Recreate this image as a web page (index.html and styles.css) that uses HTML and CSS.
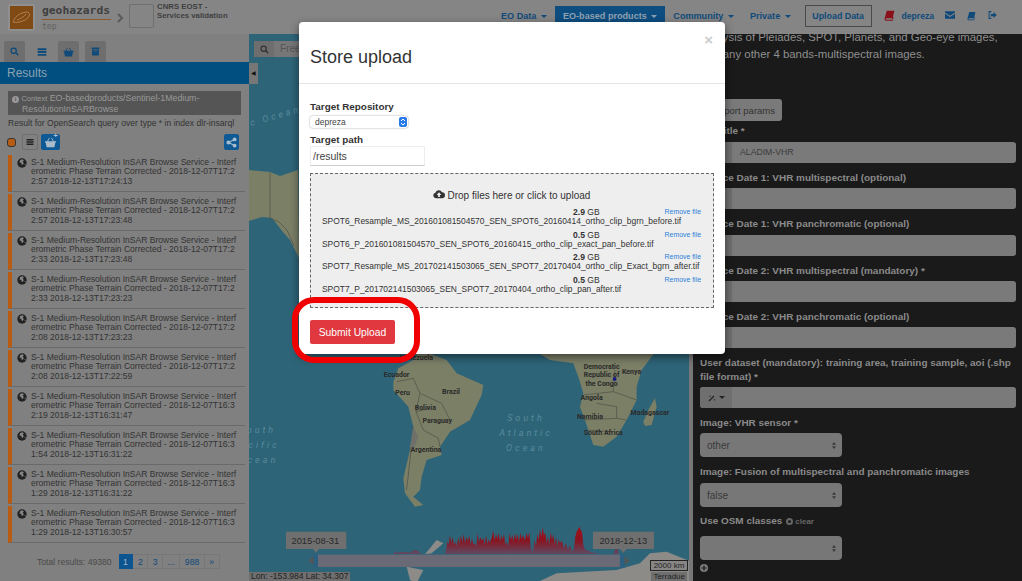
FILE: index.html

```html
<!DOCTYPE html>
<html lang="en">
<head>
    <meta charset="UTF-8">
    <title>Geohazards TEP</title>
    <link rel="stylesheet" href="styles.css">
</head>
<body>
    <svg class="defs" width="0" height="0">
        <symbol id="i-search" viewBox="0 0 16 16"><circle cx="6.500" cy="6.500" r="4.700" fill="none" stroke="currentColor" stroke-width="2.200"/><path d="M10 10l4.600 4.600" stroke="currentColor" stroke-width="2.600"/></symbol>
        <symbol id="i-list" viewBox="0 0 16 16"><path d="M1 2h14v3H1zM1 6.500h14v3H1zM1 11h14v3H1z" fill="currentColor"/></symbol>
        <symbol id="i-basket" viewBox="0 0 16 16"><path d="M0 6h16v2H15l-1.300 7H2.300L1 8H0zM3 6l3-5 1 .6L4.500 6zM13 6l-3-5-1 .6L11.500 6z" fill="currentColor"/></symbol>
        <symbol id="i-archive" viewBox="0 0 16 16"><path d="M1 1h14v3H1zM2 5h12v10H2z" fill="currentColor"/><path d="M6 7.500h4" stroke="#6e6e6e" stroke-width="1.400"/></symbol>
        <symbol id="i-globe" viewBox="0 0 16 16"><circle cx="8" cy="8" r="7.500" fill="currentColor"/><path d="M5 3l4-1 2 2-2 2 2 2-2 3-2-1V8L4 7zM12 10l2-1-1 3z" fill="#858585"/></symbol>
        <symbol id="i-cloud" viewBox="0 0 20 16"><path d="M5 15a4.500 4.500 0 0 1-1-8.900A6 6 0 0 1 15 5a5 5 0 0 1 0 10z" fill="currentColor"/><path d="M10 5l4 4.500h-2.500V13h-3V9.500H6z" fill="#eee"/></symbol>
        <symbol id="i-book" viewBox="0 0 16 16"><path d="M4 1h11l-2.500 11H3.500a1 1 0 0 0 0 2H12l1-4 1 1-1.500 4.500H2.500C1 15 .5 13.500 1 12z" fill="currentColor"/></symbol>
        <symbol id="i-mail" viewBox="0 0 16 12"><path d="M0 0h16v2L8 7 0 2zM0 4l8 5 8-5v8H0z" fill="currentColor"/></symbol>
        <symbol id="i-signout" viewBox="0 0 16 14"><path d="M6 1H2v12h4" fill="none" stroke="currentColor" stroke-width="1.800"/><path d="M5 5h5V1.500L15.500 7 10 12.500V9H5z" fill="currentColor"/></symbol>
        <symbol id="i-share" viewBox="0 0 16 16"><circle cx="12.500" cy="3.500" r="2.800" fill="currentColor"/><circle cx="3.500" cy="8" r="2.800" fill="currentColor"/><circle cx="12.500" cy="12.500" r="2.800" fill="currentColor"/><path d="M12.500 3.500L3.500 8l9 4.500" fill="none" stroke="currentColor" stroke-width="1.600"/></symbol>
        <symbol id="i-wand" viewBox="0 0 16 16"><path d="M2 14L12 4" stroke="currentColor" stroke-width="2.400"/><path d="M4 3v3M2.500 4.500h3M13 10v3M11.500 11.500h3" stroke="currentColor" stroke-width="1"/></symbol>
        <symbol id="i-updown" viewBox="0 0 5 9"><path d="M0 3.500L2.500 0 5 3.500zM0 5.500L2.500 9 5 5.500z" fill="currentColor"/></symbol>
    </svg>

    <header class="navbar">
        <div class="brand">
            <div class="brand-logo">
                <svg width="19" height="13" viewBox="0 0 19 13"><path d="M1 11C3 5 9 1 16 1c3 2 1 6-3 8-4 2-8 3-12 2zM5 9c3-1 7-3 9-6" fill="none" stroke="#b08050" stroke-width="1"/></svg>
            </div>
            <div class="brand-name">
                <div class="brand-title">geohazards</div>
                <div class="brand-sub">tep</div>
            </div>
            <svg class="brand-chevron" width="7" height="10" viewBox="0 0 7 10"><path d="M1 1l4 4-4 4" fill="none" stroke="#5a5a5a" stroke-width="2"/></svg>
            <div class="brand-box"></div>
            <div class="brand-org">CNRS EOST -<br>Services validation</div>
        </div>
        <nav class="nav-links">
            <a class="nav-link">EO Data <i class="caret"></i></a>
            <a class="nav-link active">EO-based products <i class="caret"></i></a>
            <a class="nav-link">Community <i class="caret"></i></a>
            <a class="nav-link">Private <i class="caret"></i></a>
            <a class="nav-upload">Upload Data</a>
            <svg class="nav-icon red" width="11" height="11"><use href="#i-book"/></svg>
            <a class="nav-user">depreza</a>
            <svg class="nav-icon" width="10" height="8"><use href="#i-mail"/></svg>
            <svg class="nav-icon" width="9" height="10"><use href="#i-book"/></svg>
            <svg class="nav-icon" width="9" height="8"><use href="#i-signout"/></svg>
        </nav>
    </header>

    <main class="main">
        <aside class="sidebar">
            <div class="tabs">
                <span class="tab"><svg width="9" height="9"><use href="#i-search"/></svg></span>
                <span class="tab active"><svg width="10" height="10"><use href="#i-list"/></svg></span>
                <span class="tab"><svg width="11" height="10"><use href="#i-basket"/></svg></span>
                <span class="tab"><svg width="9" height="9"><use href="#i-archive"/></svg></span>
            </div>
            <div class="results-head">Results</div>
            <div class="context"><i class="info">i</i> <span class="context-tag">Context</span> EO-basedproducts/Sentinel-1Medium-<br><span class="context-indent">ResolutionInSARBrowse</span></div>
            <p class="query">Result for OpenSearch query over type * in index dlr-insarql</p>
            <div class="tools">
                <span class="swatch"></span>
                <span class="tool"><svg width="8" height="8"><use href="#i-list"/></svg></span>
                <span class="tool blue"><svg width="13" height="11"><use href="#i-basket"/></svg><b class="plus">+</b></span>
                <span class="tool blue share"><svg width="11" height="11"><use href="#i-share"/></svg></span>
            </div>
            <ul class="results">
                <li><svg width="10" height="10"><use href="#i-globe"/></svg><p>S-1 Medium-Resolution InSAR Browse Service - Interferometric Phase Terrain Corrected - 2018-12-07T17:22:57 2018-12-13T17:24:13</p></li>
                <li><svg width="10" height="10"><use href="#i-globe"/></svg><p>S-1 Medium-Resolution InSAR Browse Service - Interferometric Phase Terrain Corrected - 2018-12-07T17:22:57 2018-12-13T17:23:48</p></li>
                <li><svg width="10" height="10"><use href="#i-globe"/></svg><p>S-1 Medium-Resolution InSAR Browse Service - Interferometric Phase Terrain Corrected - 2018-12-07T17:22:33 2018-12-13T17:23:48</p></li>
                <li><svg width="10" height="10"><use href="#i-globe"/></svg><p>S-1 Medium-Resolution InSAR Browse Service - Interferometric Phase Terrain Corrected - 2018-12-07T17:22:33 2018-12-13T17:23:23</p></li>
                <li><svg width="10" height="10"><use href="#i-globe"/></svg><p>S-1 Medium-Resolution InSAR Browse Service - Interferometric Phase Terrain Corrected - 2018-12-07T17:22:08 2018-12-13T17:23:23</p></li>
                <li><svg width="10" height="10"><use href="#i-globe"/></svg><p>S-1 Medium-Resolution InSAR Browse Service - Interferometric Phase Terrain Corrected - 2018-12-07T17:22:08 2018-12-13T17:22:59</p></li>
                <li><svg width="10" height="10"><use href="#i-globe"/></svg><p>S-1 Medium-Resolution InSAR Browse Service - Interferometric Phase Terrain Corrected - 2018-12-07T16:32:19 2018-12-13T16:31:47</p></li>
                <li><svg width="10" height="10"><use href="#i-globe"/></svg><p>S-1 Medium-Resolution InSAR Browse Service - Interferometric Phase Terrain Corrected - 2018-12-07T16:31:54 2018-12-13T16:31:22</p></li>
                <li><svg width="10" height="10"><use href="#i-globe"/></svg><p>S-1 Medium-Resolution InSAR Browse Service - Interferometric Phase Terrain Corrected - 2018-12-07T16:31:29 2018-12-13T16:31:22</p></li>
                <li><svg width="10" height="10"><use href="#i-globe"/></svg><p>S-1 Medium-Resolution InSAR Browse Service - Interferometric Phase Terrain Corrected - 2018-12-07T16:31:29 2018-12-13T16:30:57</p></li>
            </ul>
            <div class="pager">
                <span class="pager-total">Total results: 49380</span>
                <div class="pages">
                    <a class="active">1</a><a>2</a><a>3</a><a>...</a><a>988</a><a>&raquo;</a>
                </div>
            </div>
        </aside>

        <section class="map">
            <svg class="map-canvas" width="440" height="547" viewBox="0 0 440 547">
                <defs>
                    <linearGradient id="histo" x1="0" y1="0" x2="0" y2="1">
                        <stop offset="0" stop-color="#a0101c"/>
                        <stop offset="0.5" stop-color="#8a1420"/>
                        <stop offset="1" stop-color="#5e4a62"/>
                    </linearGradient>
                </defs>
                <path class="land" d="M0 136L21 138 31 142 49 136 50 224 41 206 34 198 23 184 13 183 0 187z"/>
                <path class="border" d="M21 138V184L30 188 38 196 45 212"/>
                <text class="ocean-label" transform="translate(2 92) rotate(-16)">c Ocean</text>
                <g transform="translate(1 316) scale(.3333)">
                    <path class="land" d="M430 95L445 55 490 30 510 0 590 30 620 70 700 105 695 135 660 210 600 245 570 290 575 315 530 330 515 380 510 420 490 440 520 465 495 470 465 430 460 385 480 300 490 230 475 170 430 120z"/>
                    <path class="land" d="M850 0L900 30 970 40 985 80 1000 130 990 170 1005 210 1030 285 1060 290 1100 260 1130 210 1160 150 1160 110 1175 60 1220 0z"/>
                    <path class="land" d="M1180 215L1195 180 1215 145 1220 170 1205 225 1185 228z"/>
                    <path class="ice" d="M525 613L560 570 580 580 545 610zM470 650L520 660 500 700 480 690zM855 700L920 670 1100 660 1170 640 1200 610 1250 605 1335 640V700z"/>
                    <path class="border" d="M440 95L490 85 510 130 498 185 520 240 565 265 570 290M490 230L480 330 470 420M510 130L575 160 600 210M498 185L540 175M1000 135L1090 125 1095 60M1090 125L1160 150M1000 210L1100 205 1130 210M1040 160L1100 170 1100 205M1005 240L1085 245"/>
                    <path class="glacier" d="M490 230L505 260 490 300 480 290z"/>
                    <g class="country">
                        <text x="500" y="30">Venezuela</text>
                        <text x="440" y="81">Ecuador</text>
                        <text x="458" y="136">Peru</text>
                        <text x="603" y="133">Brazil</text>
                        <text x="526" y="180">Bolivia</text>
                        <text x="562" y="220">Paraguay</text>
                        <text x="528" y="305">Argentina</text>
                        <text x="1055" y="56">Democratic</text>
                        <text x="1055" y="82">Republic of</text>
                        <text x="1055" y="108">the Congo</text>
                        <text x="1145" y="72">Kenya</text>
                        <text x="1025" y="149">Angola</text>
                        <text x="1020" y="206">Namibia</text>
                        <text x="1060" y="254">South Africa</text>
                        <text x="1200" y="195">Madagascar</text>
                    </g>
                    <g class="sea">
                        <text x="828" y="214">South</text>
                        <text x="828" y="258">Atlantic</text>
                        <text x="828" y="303">Ocean</text>
                        <text x="22" y="250">South</text>
                        <text x="18" y="294">Pacific</text>
                        <text x="25" y="339">Ocean</text>
                    </g>
                    <path d="M430 612L436 604 442 608 450 606 460 607 470 605 478 608 488 603 496 600 505 604 515 612zM585 612L590 590 593 572 596 585 600 555 604 580 608 562 612 585 616 575 620 588 625 562 629 582 633 556 637 578 641 552 645 580 650 560 654 575 658 555 662 585 666 565 670 583 675 580 679 590 683 550 687 578 691 560 695 572 700 565 704 585 708 556 712 582 716 568 720 578 726 560 730 542 734 572 738 552 742 566 746 548 750 575 754 556 758 570 762 552 766 585 770 575 775 590 779 548 783 570 787 555 791 575 795 550 799 568 803 553 807 575 811 548 815 566 820 556 824 572 830 548 834 565 838 545 842 590 846 605 850 600 854 570 858 590 862 552 866 570 870 538 874 560 878 532 882 555 886 548 890 580 894 558 898 585 902 545 906 570 910 552 914 585 918 560 922 590 926 568 930 580 936 572 942 595 948 580 954 600 960 585 966 606 972 595 976 560 980 545 984 538 988 530 992 540 996 545 1000 585 1005 598 1015 603 1030 608 1050 612zM1090 612L1096 598 1102 596 1108 612z" fill="url(#histo)"/>
                    <rect class="knob" x="190" y="612" width="14" height="42"/>
                    <rect class="knob" x="1110" y="612" width="14" height="42"/>
                    <rect class="slider-bar" x="204" y="614" width="906" height="37"/>
                    <path class="arrow" d="M190 618L176 632 190 644zM1124 618L1138 632 1124 644z"/>
                    <path class="date-box" d="M108 545H289V597H207L198 608 189 597H108zM1029 545H1212V597H1130L1120 608 1110 597H1029z"/>
                    <text class="date" x="196" y="582">2015-08-31</text>
                    <text class="date" x="1120" y="582">2018-12-13</text>
                    <rect class="dot" x="1089" y="82" width="10" height="10"/>
                </g>
            </svg>
            <div class="map-search">
                <span class="map-search-icon"><svg width="9" height="9"><use href="#i-search"/></svg></span>
                <span class="map-search-text">Free</span>
            </div>
            <div class="map-collapse">&#9664;</div>
            <div class="map-coords">Lon: -153.984 Lat: 34.307</div>
            <div class="map-scale">2000 km</div>
            <div class="map-credit">Terradue</div>
        </section>

        <div class="splitter"></div>

        <section class="panel">
            <p class="panel-text">Analysis of Pleiades, SPOT, Planets, and Geo-eye images,<br>or many other 4 bands-multispectral images.</p>
            <button class="import-btn">Import params</button>
            <label class="field-label first">Job title *</label>
            <div class="input-group"><span class="addon"></span><span class="field">ALADIM-VHR</span></div>
            <label class="field-label">Source Date 1: VHR multispectral (optional)</label>
            <div class="input-group"><span class="addon"></span><span class="field"></span></div>
            <label class="field-label">Source Date 1: VHR panchromatic (optional)</label>
            <div class="input-group"><span class="addon"></span><span class="field"></span></div>
            <label class="field-label">Source Date 2: VHR multispectral (mandatory) *</label>
            <div class="input-group"><span class="addon"></span><span class="field"></span></div>
            <label class="field-label">Source Date 2: VHR panchromatic (optional)</label>
            <div class="input-group"><span class="addon"></span><span class="field"></span></div>
            <label class="field-label">User dataset (mandatory): training area, training sample, aoi (.shp file format) *</label>
            <div class="input-group"><span class="addon wand"><svg width="8" height="8"><use href="#i-wand"/></svg><i class="caret"></i></span><span class="field"></span></div>
            <label class="field-label">Image: VHR sensor *</label>
            <div class="panel-select"><span>other</span><svg width="4" height="9"><use href="#i-updown"/></svg></div>
            <label class="field-label">Image: Fusion of multispectral and panchromatic images</label>
            <div class="panel-select fusion"><span>false</span><svg width="4" height="9"><use href="#i-updown"/></svg></div>
            <label class="field-label osm">Use OSM classes <span class="clear"><i class="ring"></i> clear</span></label>
            <div class="panel-select classes"><span></span><svg width="4" height="9"><use href="#i-updown"/></svg></div>
            <svg class="add" width="8" height="8" viewBox="0 0 8 8"><circle cx="4" cy="4" r="4" fill="#7a7a7a"/><path d="M4 1.500v5M1.500 4h5" stroke="#1a1a1a" stroke-width="1.200"/></svg>
        </section>
    </main>

    <div class="modal">
        <div class="modal-header">
            <h2>Store upload</h2>
            <span class="modal-close">&times;</span>
        </div>
        <div class="modal-body">
            <label class="modal-label">Target Repository</label>
            <div class="modal-select">
                <span>depreza</span>
                <svg width="8" height="10" viewBox="0 0 8 10"><rect width="8" height="10" rx="2" fill="#2a7ae8"/><path d="M2 4l2-2 2 2M2 6l2 2 2-2" fill="none" stroke="#fff"/></svg>
            </div>
            <label class="modal-label second">Target path</label>
            <input class="modal-input" type="text" value="/results">
            <div class="dropzone">
                <div class="drop-msg"><svg width="12" height="10"><use href="#i-cloud"/></svg> Drop files here or click to upload</div>
                <div class="file">
                    <div class="file-size"><b>2.9</b> GB</div>
                    <a class="file-remove">Remove file</a>
                    <div class="file-name">SPOT6_Resample_MS_201601081504570_SEN_SPOT6_20160414_ortho_clip_bgrn_before.tif</div>
                </div>
                <div class="file">
                    <div class="file-size"><b>0.5</b> GB</div>
                    <a class="file-remove">Remove file</a>
                    <div class="file-name">SPOT6_P_201601081504570_SEN_SPOT6_20160415_ortho_clip_exact_pan_before.tif</div>
                </div>
                <div class="file">
                    <div class="file-size"><b>2.9</b> GB</div>
                    <a class="file-remove">Remove file</a>
                    <div class="file-name">SPOT7_Resample_MS_201702141503065_SEN_SPOT7_20170404_ortho_clip_Exact_bgrn_after.tif</div>
                </div>
                <div class="file">
                    <div class="file-size"><b>0.5</b> GB</div>
                    <a class="file-remove">Remove file</a>
                    <div class="file-name">SPOT7_P_201702141503065_SEN_SPOT7_20170404_ortho_clip_pan_after.tif</div>
                </div>
            </div>
            <button class="submit-btn">Submit Upload</button>
        </div>
    </div>

    <div class="annotation"></div>
</body>
</html>
```

FILE: styles.css

```css
* {
    box-sizing: border-box;
}
html, body {
    margin: 0;
    height: 581px;
    overflow: hidden;
}
body {
    font-family: "Liberation Sans", Arial, sans-serif;
    color: #333;
    background-color: #808080;
}
.defs {
    position: absolute;
}
p {
    margin: 0;
}

/* top bar, everything behind the modal is already dimmed */
.navbar {
    height: 34px;
    display: flex;
    justify-content: space-between;
    background-color: #858585;
}
.brand {
    display: flex;
    align-items: flex-start;
    padding: 4px 0 0 8px;
}
.brand-logo {
    width: 27px;
    height: 27px;
    display: flex;
    align-items: center;
    justify-content: center;
    background-color: #7f4a14;
    border: 2px solid #8f8f8f;
    border-radius: 2px;
}
.brand-name {
    margin-left: 7px;
    width: 69px;
}
.brand-title {
    font-family: "DejaVu Sans Mono", monospace;
    font-size: 11.300px;
    font-weight: 700;
    line-height: 14px;
    padding-bottom: 1px;
    color: #3f3f3f;
    border-bottom: 1px solid #8a5a2a;
}
.brand-sub {
    font-family: "DejaVu Sans Mono", monospace;
    font-size: 8px;
    line-height: 13px;
    color: #5f5f5f;
}
.brand-chevron {
    margin: 9px 0 0 6px;
}
.brand-box {
    width: 25px;
    height: 24px;
    margin-left: 5px;
    border: 1px solid #6f6f6f;
    border-radius: 2px;
}
.brand-org {
    margin: -1px 0 0 3px;
    font-size: 7.800px;
    font-weight: 700;
    line-height: 8.700px;
    color: #3f3f3f;
}
.nav-links {
    display: flex;
    align-items: flex-start;
    padding-right: 25px;
    font-size: 9.100px;
    font-weight: 700;
    color: #0f4a7a;
}
.nav-link {
    height: 28px;
    margin-top: 6px;
    padding: 5px 8px 0;
    white-space: nowrap;
}
.nav-link.active {
    background-color: #0d4d80;
    color: #8fa2b2;
}
.caret {
    display: inline-block;
    width: 0;
    height: 0;
    margin-left: 2px;
    vertical-align: middle;
    border-top: 3px solid currentColor;
    border-left: 3px solid transparent;
    border-right: 3px solid transparent;
}
.nav-upload {
    height: 22px;
    margin: 5px 0 0 6px;
    padding: 5px 6.500px 0;
    font-size: 8.900px;
    border: 1px solid #4a4a4a;
    white-space: nowrap;
}
.nav-icon {
    margin: 11px 0 0 12px;
}
.nav-icon.red {
    margin: 10px 0 0 12px;
    color: #8a0f18;
}
.nav-user {
    margin: 11px 0 0 7px;
    font-size: 8.600px;
}
.nav-user + .nav-icon {
    margin-left: 11px;
}

.main {
    display: flex;
    height: 547px;
}

/* left column */
.sidebar {
    width: 249px;
    flex: none;
    background-color: #808080;
    overflow: hidden;
}
.tabs {
    display: flex;
    gap: 6px;
    padding: 7px 0 0 4px;
    height: 28px;
}
.tab {
    width: 21px;
    height: 21px;
    display: flex;
    align-items: center;
    justify-content: center;
    background-color: #6e6e6e;
    color: #0f4a7a;
    border-radius: 2px 2px 0 0;
}
.tab.active {
    background-color: #808080;
}
.results-head {
    height: 22px;
    padding: 4px 7px;
    font-size: 12px;
    line-height: 15px;
    color: #8fa2b2;
    background-color: #004f80;
}
.context {
    margin: 7px 8px 0;
    height: 24px;
    padding: 2px 4px 0 4px;
    font-size: 8.800px;
    line-height: 10px;
    color: #999;
    background-color: #555;
    white-space: nowrap;
}
.info {
    display: inline-block;
    width: 7px;
    height: 7px;
    font-size: 6px;
    font-style: normal;
    font-weight: 700;
    line-height: 7px;
    text-align: center;
    color: #555;
    background-color: #999;
    border-radius: 50%;
}
.context-tag {
    font-size: 7.500px;
}
.context-indent {
    margin-left: 10px;
}
.query {
    margin: 3px 8px 0;
    font-size: 8.570px;
    line-height: 11px;
    white-space: nowrap;
}
.tools {
    display: flex;
    align-items: center;
    gap: 3px;
    margin: 5px 10px 0 7px;
    height: 16px;
}
.swatch {
    width: 9px;
    height: 9px;
    margin-right: 3px;
    background-color: #b85c14;
    border: 1px solid #333;
    border-radius: 3px;
}
.tool {
    width: 16px;
    height: 16px;
    display: flex;
    align-items: center;
    justify-content: center;
    color: #222;
    border: 1px solid #6f6f6f;
    border-radius: 2px;
}
.tool.blue {
    position: relative;
    width: 19px;
    color: #a8bccc;
    background-color: #0f5a94;
    border-color: #0f5a94;
}
.plus {
    position: absolute;
    top: -3px;
    right: 1px;
    font-size: 8px;
    line-height: 8px;
}
.tool.share {
    width: 15px;
    margin-left: auto;
}
.results {
    list-style: none;
    margin: 5px 0 0 8px;
    padding: 0;
    width: 237px;
}
.results li {
    display: flex;
    height: 37px;
    margin-bottom: 2px;
    padding: 3px 0 0 5px;
    border-left: 4px solid #b85c14;
    border-bottom: 1px solid #6a6a6a;
}
.results svg {
    flex: none;
    color: #222;
}
.results p {
    width: 208px;
    margin-left: 4px;
    font-size: 8.560px;
    line-height: 9.300px;
    word-break: break-all;
}
.pager {
    display: flex;
    align-items: center;
    margin: 11px 0 0 37px;
}
.pager-total {
    margin-right: 7px;
    font-size: 8.600px;
    color: #4a4a4a;
    white-space: nowrap;
}
.pages {
    display: flex;
    height: 15px;
    font-size: 8.700px;
    color: #0f4a7a;
}
.pages a {
    padding: 2px 4.500px;
    border: 1px solid #777;
    border-left-width: 0;
    line-height: 10px;
}
.pages a.active {
    color: #a0b8c8;
    background-color: #0d5590;
    border-color: #0d5590;
}

/* map */
.map {
    position: relative;
    width: 440px;
    flex: none;
    background-color: #2e6478;
    overflow: hidden;
}
.map-canvas {
    display: block;
}
.land {
    fill: #7b7f66;
}
.ice {
    fill: #8c8b88;
}
.glacier {
    fill: #70706a;
}
.border {
    fill: none;
    stroke: #55584a;
    stroke-width: 2.500;
}
.map-canvas > .border {
    stroke-width: .8;
}
.country text {
    font-family: "Roboto", sans-serif;
    font-size: 21px;
    font-weight: 700;
    text-anchor: middle;
    fill: #2a2a2a;
}
.sea text {
    font-family: "Roboto", sans-serif;
    font-size: 27px;
    font-style: italic;
    letter-spacing: 9px;
    text-anchor: middle;
    fill: #5a8a9c;
}
.ocean-label {
    font-family: "Roboto", sans-serif;
    font-size: 9px;
    font-style: italic;
    letter-spacing: 3px;
    fill: #5a8a9c;
}
.slider-bar {
    fill: #6a6976;
}
.knob {
    fill: #2c6080;
}
.arrow {
    fill: #555;
}
.date-box {
    fill: #6f6f6f;
}
.date {
    font-family: "Liberation Sans", sans-serif;
    font-size: 28px;
    text-anchor: middle;
    fill: #2a2a2a;
}
.dot {
    fill: #15158a;
}
.map-search {
    position: absolute;
    left: 5px;
    top: 7px;
    display: flex;
    height: 16px;
    width: 200px;
    font-size: 10px;
    line-height: 16px;
    color: #555;
    background-color: #777;
    border-radius: 2px;
}
.map-search-icon {
    width: 20px;
    display: flex;
    align-items: center;
    justify-content: center;
    background-color: #6e6e6e;
    color: #333;
}
.map-search-text {
    padding-left: 6px;
}
.map-collapse {
    position: absolute;
    left: 0;
    top: 29px;
    width: 9px;
    height: 21px;
    font-size: 6px;
    line-height: 21px;
    text-align: center;
    color: #111;
    background-color: #777;
}
.map-coords {
    position: absolute;
    left: 0;
    bottom: 0;
    padding: 0 2px;
    height: 9px;
    font-size: 8.500px;
    line-height: 9px;
    color: #222;
    background-color: #6f6f6f;
    white-space: nowrap;
}
.map-scale {
    position: absolute;
    left: 401px;
    top: 526px;
    width: 38px;
    height: 11px;
    font-size: 8px;
    line-height: 10px;
    text-align: center;
    color: #222;
    border: 1px solid #222;
    background-color: rgba(130, 130, 130, 0.5);
}
.map-credit {
    position: absolute;
    right: 2px;
    bottom: 0;
    padding: 0 2px;
    font-size: 8px;
    line-height: 9px;
    color: #222;
    background-color: #6f6f6f;
}
.splitter {
    width: 4px;
    flex: none;
    background-color: #777;
}

/* right form */
.panel {
    flex: 1;
    padding: 0 6px 0 7px;
    color: #8a8a8a;
    background-color: #1a1a1a;
    overflow: hidden;
}
.panel-text {
    margin-top: -5px;
    font-size: 11.400px;
    line-height: 17px;
    color: #8f8f8f;
    white-space: nowrap;
}
.import-btn {
    display: block;
    width: 82px;
    height: 22px;
    margin-top: 36px;
    padding: 0 7px 0 0;
    font-family: inherit;
    font-size: 9.500px;
    text-align: right;
    color: #333;
    background-color: #7a7a7a;
    border: 0;
    border-radius: 3px;
}
.field-label {
    display: block;
    margin-top: 8px;
    font-size: 9.950px;
    font-weight: 700;
    line-height: 14px;
    color: #8a8a8a;
}
.field-label.first {
    margin-top: 3px;
}
.input-group {
    display: flex;
    height: 21px;
    margin-top: 3.250px;
    font-size: 8.700px;
    color: #3a3a3a;
    background-color: #7a7a7a;
    border-radius: 3px;
    overflow: hidden;
}
.first + .input-group {
    margin-top: 4px;
}
.addon {
    width: 32px;
    display: flex;
    align-items: center;
    justify-content: center;
    gap: 1px;
    color: #222;
    background-color: #6f6f6f;
}
.field {
    flex: 1;
    padding: 0 8px;
    line-height: 21px;
}
.panel-select {
    display: flex;
    align-items: center;
    justify-content: space-between;
    width: 142px;
    height: 24px;
    margin-top: 3px;
    padding: 0 6px 0 7px;
    font-size: 10px;
    color: #3a3a3a;
    background-color: #777;
    border-radius: 4px;
}
.panel-select.fusion {
    margin-top: 4px;
}
.panel-select.classes {
    margin-top: 7px;
}
.field-label.osm {
    margin-top: 7px;
}
.clear {
    margin-left: 1px;
    font-size: 8px;
    color: #666;
}
.ring {
    display: inline-block;
    width: 7px;
    height: 7px;
    vertical-align: -1px;
    border: 2px solid #666;
    border-radius: 50%;
}
.add {
    display: block;
    margin-top: 4px;
}

/* modal */
.modal {
    position: absolute;
    left: 299px;
    top: 22px;
    width: 426px;
    height: 332px;
    color: #333;
    background-color: #fff;
    border-radius: 4px;
    box-shadow: 0 3px 9px rgba(0, 0, 0, 0.5);
}
.modal-header {
    position: relative;
    height: 62px;
    padding: 23px 11px 0;
    border-bottom: 1px solid #e5e5e5;
}
.modal-header h2 {
    margin: 0;
    font-size: 18px;
    font-weight: 400;
    line-height: 24px;
}
.modal-close {
    position: absolute;
    right: 12px;
    top: 9px;
    font-size: 15px;
    font-weight: 700;
    line-height: 18px;
    color: #ccc;
}
.modal-body {
    padding: 16px 11px 0;
}
.modal-label {
    display: block;
    font-size: 9.900px;
    font-weight: 700;
    line-height: 14px;
}
.modal-label.second {
    margin-top: 5px;
}
.modal-select {
    display: flex;
    align-items: center;
    justify-content: space-between;
    width: 98px;
    height: 12px;
    margin-top: 2px;
    padding: 0 1px 0 5px;
    font-size: 8.500px;
    color: #444;
    border-radius: 3px;
    box-shadow: 0 0 2px rgba(0, 0, 0, 0.4);
}
.modal-input {
    display: block;
    width: 115px;
    height: 20px;
    margin-top: -1px;
    padding: 0 2px;
    font-family: inherit;
    font-size: 10.500px;
    color: #444;
    border: 1px solid #eee;
    border-bottom-color: #ccc;
}
.dropzone {
    height: 135px;
    margin-top: 7px;
    padding: 14px 12px 0 11px;
    background-color: #eee;
    border: 1px dashed #666;
}
.drop-msg {
    font-size: 10px;
    line-height: 16px;
    text-align: center;
}
.file {
    position: relative;
    height: 22.700px;
    line-height: 9px;
    padding-top: 4px;
}
.file-size {
    padding-left: 251px;
    font-size: 8.600px;
}
.file-remove {
    position: absolute;
    right: 0;
    top: 3px;
    font-size: 6.900px;
    color: #2a80d8;
}
.file-name {
    white-space: nowrap;
    font-size: 8.430px;
}
.submit-btn {
    display: block;
    width: 85px;
    height: 24px;
    margin-top: 12px;
    padding: 0;
    font-family: inherit;
    font-size: 10.300px;
    color: #fff;
    background-color: #e0383e;
    border: 0;
    border-radius: 2px;
}

/* hand-drawn red mark round the button */
.annotation {
    position: absolute;
    left: 292px;
    top: 297px;
    width: 128px;
    height: 66px;
    border: 6px solid #f00000;
    border-radius: 22px;
}
```
